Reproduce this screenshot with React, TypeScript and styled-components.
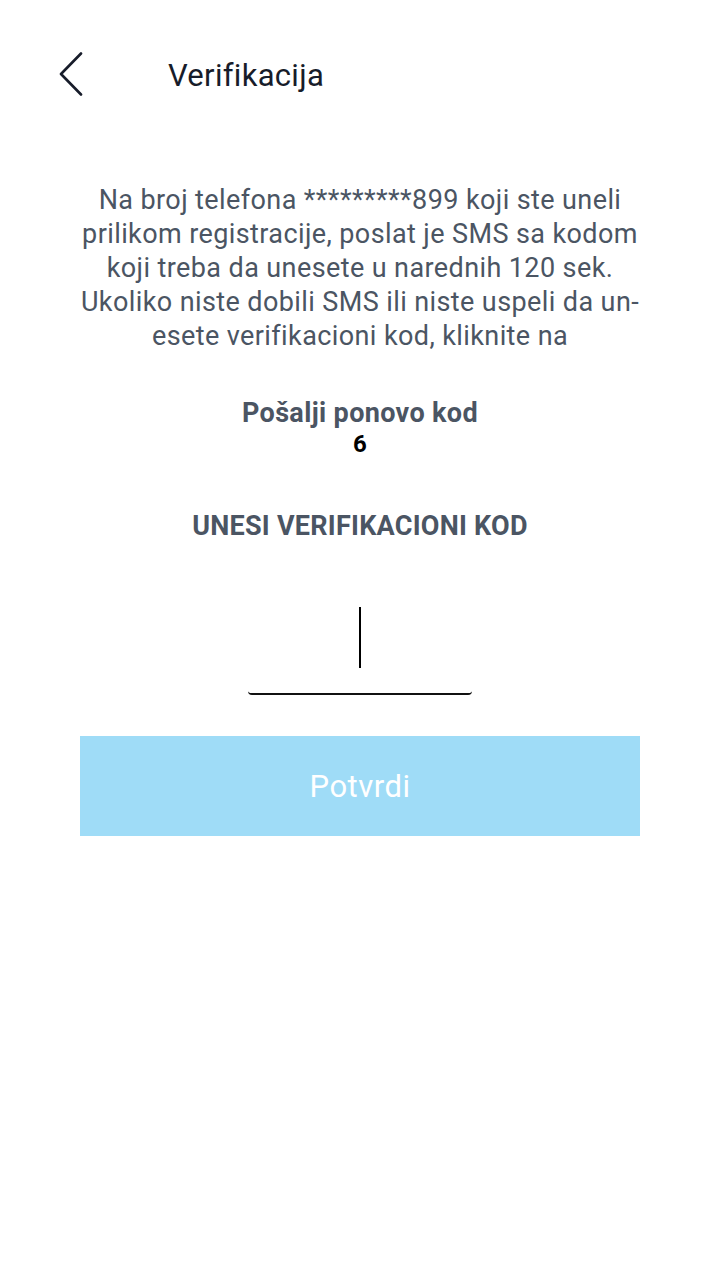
import React from "react";
import styled, { createGlobalStyle } from "styled-components";

const Global = createGlobalStyle`
  html, body { margin: 0; padding: 0; background: #ffffff; }
  body { font-family: Roboto, "Noto Sans", "Liberation Sans", sans-serif; }
  * { box-sizing: border-box; }
`;

const Page = styled.div`
  width: 720px;
  min-height: 1280px;
  background: #fff;
  display: flex;
  flex-direction: column;
`;

const Header = styled.header`
  height: 150px;
  display: flex;
  align-items: flex-start;
  padding: 52px 0 0 58px;
  gap: 84px;
`;

const BackButton = styled.button`
  border: none;
  background: none;
  padding: 0;
  width: 26px;
  height: 44px;
  display: flex;
  cursor: pointer;
`;

const Title = styled.h1`
  margin: 7px 0 0;
  font-size: 31px;
  font-weight: 400;
  letter-spacing: 0.3px;
  color: #171c2a;
  line-height: 34px;
`;

const Content = styled.main`
  padding: 33px 70px 0;
  display: flex;
  flex-direction: column;
  align-items: center;
`;

const Info = styled.p`
  margin: 0;
  text-align: center;
  font-size: 27px;
  letter-spacing: 0.4px;
  line-height: 34px;
  color: #4b5563;
`;

const Resend = styled.button`
  margin-top: 45px;
  border: none;
  background: none;
  padding: 0;
  font-family: inherit;
  font-size: 27px;
  letter-spacing: 0.35px;
  font-weight: 700;
  color: #4b5563;
  line-height: 30px;
`;

const Counter = styled.div`
  margin-top: 3px;
  font-size: 24px;
  font-weight: 700;
  color: #000;
  line-height: 26px;
`;

const Label = styled.div`
  margin-top: 54px;
  font-size: 27px;
  letter-spacing: 0.25px;
  font-weight: 700;
  color: #4b5563;
  line-height: 30px;
`;

const CodeField = styled.div`
  margin-top: 60px;
  width: 224px;
  height: 94px;
  border-bottom: 2px solid #111;
  border-radius: 0 0 4px 4px;
  display: flex;
  justify-content: center;
  align-items: flex-start;
  padding-top: 6px;
`;

const Caret = styled.div`
  width: 2px;
  height: 61px;
  background: #000;
`;

const Submit = styled.button`
  margin-top: 41px;
  width: 560px;
  height: 100px;
  border: none;
  background: #9fdcf7;
  color: #fff;
  font-family: inherit;
  font-size: 31px;
  letter-spacing: 0.5px;
  font-weight: 400;
`;

export default function App() {
  return (
    <Page>
      <Global />
      <Header>
        <BackButton aria-label="Nazad">
          <svg width="26" height="44" viewBox="0 0 26 44" fill="none">
            <path d="M23 1.5 L3 22 L23 42.5" stroke="#171c2a" strokeWidth="2.6" strokeLinecap="round" strokeLinejoin="round" />
          </svg>
        </BackButton>
        <Title>Verifikacija</Title>
      </Header>
      <Content>
        <Info>
          Na broj telefona *********899 koji ste uneli
          <br />
          prilikom registracije, poslat je SMS sa kodom
          <br />
          koji treba da unesete u narednih 120 sek.
          <br />
          Ukoliko niste dobili SMS ili niste uspeli da un-
          <br />
          esete verifikacioni kod, kliknite na
        </Info>
        <Resend>Pošalji ponovo kod</Resend>
        <Counter>6</Counter>
        <Label>UNESI VERIFIKACIONI KOD</Label>
        <CodeField>
          <Caret />
        </CodeField>
        <Submit>Potvrdi</Submit>
      </Content>
    </Page>
  );
}
